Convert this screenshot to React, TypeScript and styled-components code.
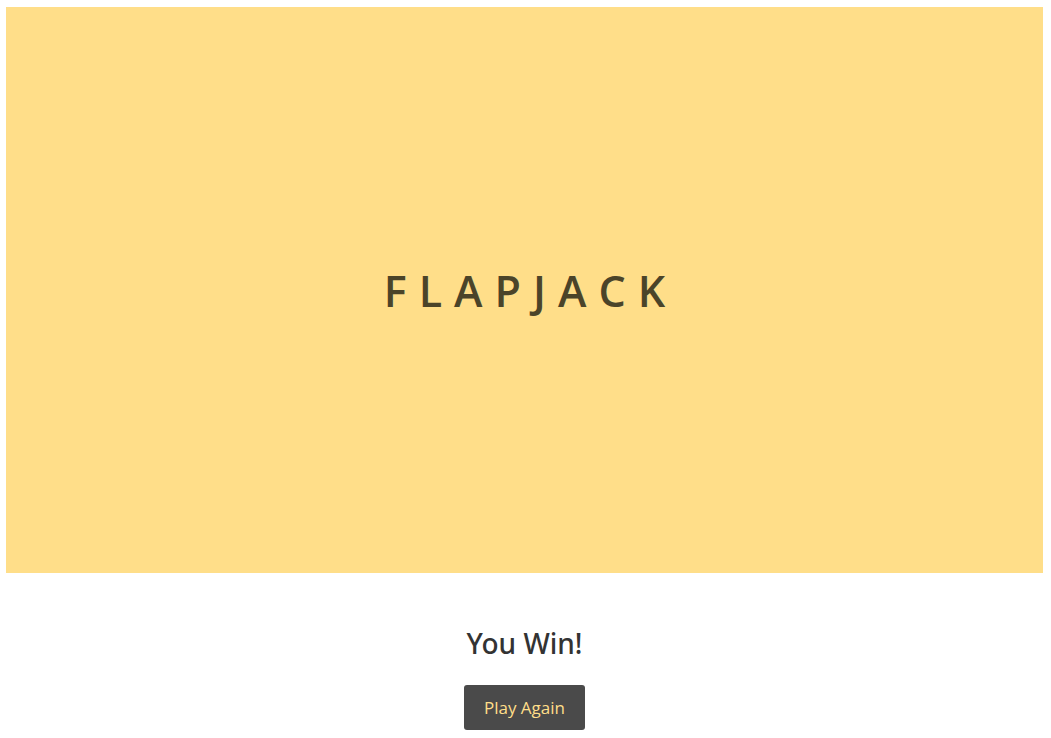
import React from "react";
import styled, { createGlobalStyle } from "styled-components";

const Global = createGlobalStyle`
  html, body { margin: 0; padding: 0; background: #ffffff; }
  body { font-family: "Open Sans", "Noto Sans", sans-serif; }
`;

const Page = styled.div`
  padding: 7px 8px 0 6px;
  display: flex;
  flex-direction: column;
  align-items: stretch;
`;

const Hero = styled.section`
  height: 566px;
  background: #ffde89;
  display: flex;
  align-items: center;
  justify-content: center;
`;

const Title = styled.h1`
  margin: 0;
  padding-left: 0.28em;
  font-size: 43px;
  font-weight: 600;
  letter-spacing: 0.28em;
  color: #4b4429;
  line-height: 1;
`;

const Result = styled.div`
  display: flex;
  flex-direction: column;
  align-items: center;
  padding-top: 50px;
`;

const Heading = styled.h2`
  margin: 0;
  font-family: "Noto Sans", "Open Sans", sans-serif;
  font-size: 28px;
  font-weight: 500;
  color: #333333;
  line-height: 40px;
`;

const Button = styled.button`
  margin-top: 22px;
  width: 121px;
  height: 45px;
  border: none;
  border-radius: 3px;
  background: #4a4a4a;
  color: #ffde89;
  font-family: "Open Sans", "Noto Sans", sans-serif;
  font-size: 17px;
  cursor: pointer;
`;

export default function App() {
  return (
    <>
      <Global />
      <Page>
        <Hero>
          <Title>FLAPJACK</Title>
        </Hero>
        <Result>
          <Heading>You Win!</Heading>
          <Button>Play Again</Button>
        </Result>
      </Page>
    </>
  );
}
